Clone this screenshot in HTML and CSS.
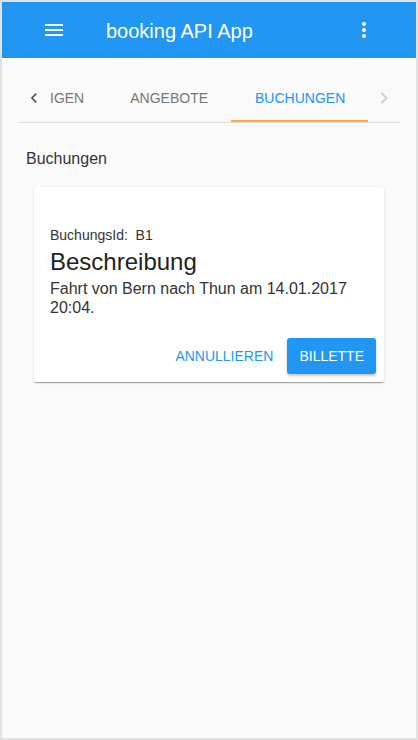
FILE: index.html
```html
<!DOCTYPE html>
<html lang="de">
<head>
<meta charset="utf-8">
<title>booking API App</title>
<link rel="stylesheet" href="styles.css">
</head>
<body>
<div class="frame">
  <header class="toolbar">
    <svg class="icon menu-icon" viewBox="0 0 24 24" width="24" height="24"><path d="M3 18h18v-2H3v2zm0-5h18v-2H3v2zm0-7v2h18V6H3z"/></svg>
    <span class="title">booking API App</span>
    <svg class="icon" viewBox="0 0 24 24" width="24" height="24"><path d="M12 8c1.1 0 2-.9 2-2s-.9-2-2-2-2 .9-2 2 .9 2 2 2zm0 2c-1.1 0-2 .9-2 2s.9 2 2 2 2-.9 2-2-.9-2-2-2zm0 6c-1.1 0-2 .9-2 2s.9 2 2 2 2-.9 2-2-.9-2-2-2z"/></svg>
  </header>
  <main class="content">
    <nav class="tabbar">
      <div class="scroll-btn">
        <svg class="chev chev-left" viewBox="0 0 24 24" width="20" height="20"><path d="M15.41 7.41L14 6l-6 6 6 6 1.41-1.41L10.83 12z"/></svg>
      </div>
      <div class="tabs">
        <div class="tab tab-clipped">IGEN</div>
        <div class="tab tab-mid">ANGEBOTE</div>
        <div class="tab active">BUCHUNGEN</div>
      </div>
      <div class="scroll-btn">
        <svg class="chev chev-right" viewBox="0 0 24 24" width="24" height="24"><path d="M10 6L8.59 7.41 13.17 12l-4.58 4.59L10 18l6-6z"/></svg>
      </div>
    </nav>
    <h2 class="section-title">Buchungen</h2>
    <section class="card">
      <div class="card-body">
        <div class="booking-id">BuchungsId:&nbsp; B1</div>
        <div class="card-title">Beschreibung</div>
        <p class="card-text">Fahrt von Bern nach Thun am 14.01.2017 20:04.</p>
      </div>
      <div class="card-actions">
        <button class="btn btn-flat">ANNULLIEREN</button>
        <button class="btn btn-raised">BILLETTE</button>
      </div>
    </section>
  </main>
</div>
</body>
</html>
```

FILE: styles.css
```css
* { box-sizing: border-box; }

html, body {
  margin: 0;
  padding: 0;
  background: #fafafa;
  font-family: "Liberation Sans", Arial, sans-serif;
}

.frame {
  width: 418px;
  height: 740px;
  border: 2px solid #e2e2e2;
  background: #fafafa;
  display: flex;
  flex-direction: column;
}

.toolbar {
  height: 56px;
  flex: none;
  background: #2196f3;
  color: #fff;
  display: flex;
  align-items: center;
  padding: 0 40px;
}

.icon {
  fill: #fff;
  flex: none;
  display: block;
}

.title {
  flex: 1;
  margin-left: 40px;
  font-size: 20px;
  line-height: 56px;
  padding-top: 1px;
}

.content {
  padding: 16px;
}

.tabbar {
  display: flex;
  height: 49px;
  border-bottom: 1px solid #dedede;
}

.scroll-btn {
  width: 32px;
  flex: none;
  display: flex;
  align-items: center;
  justify-content: center;
}

.chev-left { fill: #555; }
.chev-right { fill: #cfcfcf; }

.tabs {
  flex: 1;
  display: flex;
  overflow: hidden;
}

.tab {
  flex: none;
  padding: 0 24px;
  height: 48px;
  line-height: 48px;
  font-size: 14px;
  color: #777;
  border-bottom: 2px solid transparent;
}

.tab-clipped { padding: 0 22px 0 0; }
.tab-mid { padding-right: 23px; }

.tab.active {
  color: #2196f3;
  border-bottom-color: #ffab40;
}

.section-title {
  margin: 26px 0 0 8px;
  font-size: 16px;
  font-weight: normal;
  line-height: 20px;
  color: #333;
}

.card {
  margin: 18px 16px 0;
  background: #fff;
  border-radius: 2px;
  box-shadow: 0 2px 1px -1px rgba(0,0,0,.2), 0 1px 1px 0 rgba(0,0,0,.14), 0 1px 3px 0 rgba(0,0,0,.12);
}

.card-body {
  padding: 38px 16px 0;
}

.booking-id {
  font-size: 14px;
  line-height: 20px;
  color: #333;
}

.card-title {
  font-size: 24px;
  line-height: 33px;
  color: #222;
}

.card-text {
  margin: 1px 0 0;
  font-size: 16px;
  line-height: 19px;
  color: #333;
}

.card-actions {
  display: flex;
  justify-content: flex-end;
  gap: 6px;
  padding: 8px;
  margin-top: 13px;
}

.btn {
  height: 36px;
  border: 0;
  border-radius: 3px;
  font-family: inherit;
  font-size: 14px;
  cursor: pointer;
}

.btn-flat {
  background: transparent;
  color: #2196f3;
  padding: 0 8px;
}

.btn-raised {
  background: #2196f3;
  color: #fff;
  padding: 0 12px;
  min-width: 88px;
  box-shadow: 0 2px 2px 0 rgba(0,0,0,.14), 0 1px 4px 0 rgba(0,0,0,.12);
}
```
